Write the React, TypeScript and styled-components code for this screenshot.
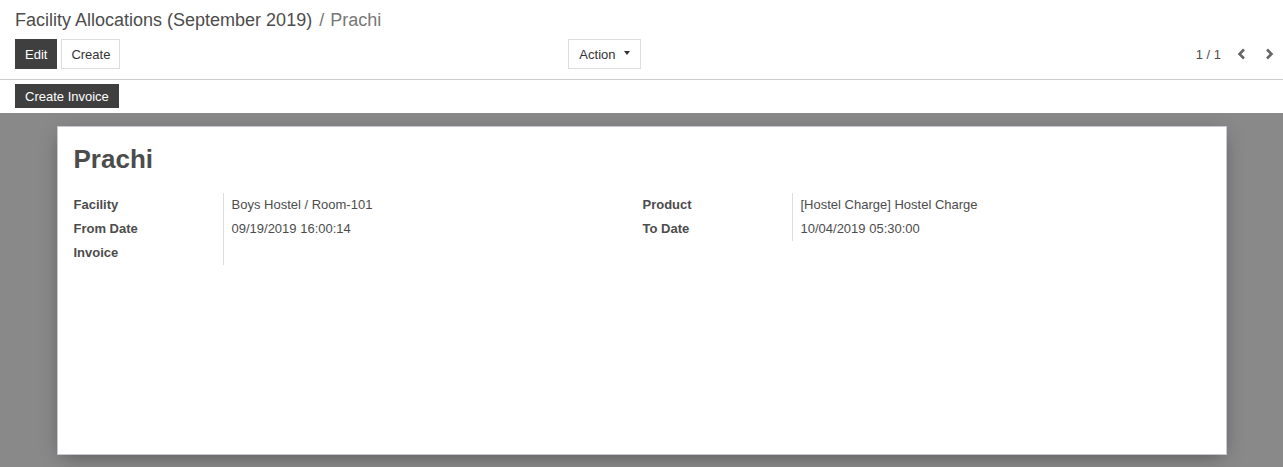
import styled, { createGlobalStyle } from "styled-components"

const GlobalStyle = createGlobalStyle`
  html, body {
    margin: 0;
    padding: 0;
    background: #ffffff;
    font-family: "Liberation Sans", Arial, sans-serif;
    font-size: 13px;
    color: #4c4c4c;
  }
`

type Field = { label: string; value?: string }

const leftFields: Field[] = [
  { label: "Facility", value: "Boys Hostel / Room-101" },
  { label: "From Date", value: "09/19/2019 16:00:14" },
  { label: "Invoice" },
]

const rightFields: Field[] = [
  { label: "Product", value: "[Hostel Charge] Hostel Charge" },
  { label: "To Date", value: "10/04/2019 05:30:00" },
]

const ChevronLeft = () => (
  <svg width="9" height="12" viewBox="0 0 9 12">
    <path d="M7 1.5 L2.5 6 L7 10.5" fill="none" stroke="#666" strokeWidth="2.6" />
  </svg>
)

const ChevronRight = () => (
  <svg width="9" height="12" viewBox="0 0 9 12">
    <path d="M2 1.5 L6.5 6 L2 10.5" fill="none" stroke="#666" strokeWidth="2.6" />
  </svg>
)

const FieldGroup = ({ fields }: { fields: Field[] }) => (
  <StyledGroup>
    {fields.map((f) => (
      <StyledFieldRow key={f.label}>
        <StyledLabel>{f.label}</StyledLabel>
        <StyledValue>{f.value}</StyledValue>
      </StyledFieldRow>
    ))}
  </StyledGroup>
)

const App = () => {
  return (
    <>
      <GlobalStyle />
      <StyledControlPanel>
        <StyledBreadcrumb>
          <span>Facility Allocations (September 2019)</span>
          <StyledCrumbSep>/</StyledCrumbSep>
          <StyledCrumbActive>Prachi</StyledCrumbActive>
        </StyledBreadcrumb>
        <StyledCpRow>
          <StyledCpLeft>
            <StyledButtons>
              <StyledButton $primary>Edit</StyledButton>
              <StyledButton>Create</StyledButton>
            </StyledButtons>
            <StyledButton $wide>
              Action <StyledCaret />
            </StyledButton>
          </StyledCpLeft>
          <StyledPager>
            <StyledPagerValue>1 / 1</StyledPagerValue>
            <StyledPagerArrow>
              <ChevronLeft />
            </StyledPagerArrow>
            <StyledPagerArrow>
              <ChevronRight />
            </StyledPagerArrow>
          </StyledPager>
        </StyledCpRow>
      </StyledControlPanel>

      <StyledStatusBar>
        <StyledSmallButton>Create Invoice</StyledSmallButton>
      </StyledStatusBar>

      <StyledSheetBackground>
        <StyledSheet>
          <StyledTitle>Prachi</StyledTitle>
          <StyledGroups>
            <FieldGroup fields={leftFields} />
            <FieldGroup fields={rightFields} />
          </StyledGroups>
        </StyledSheet>
      </StyledSheetBackground>
    </>
  )
}

export default App

const StyledControlPanel = styled.div`
  padding: 5px 15px 10px;
  border-bottom: 1px solid #cccccc;
`

const StyledBreadcrumb = styled.div`
  height: 30px;
  line-height: 30px;
  font-size: 18px;
  color: #4c4c4c;
  margin-bottom: 4px;
`

const StyledCrumbSep = styled.span`
  color: #777777;
  padding: 0 6px 0 7px;
`

const StyledCrumbActive = styled.span`
  color: #777777;
`

const StyledCpRow = styled.div`
  display: grid;
  grid-template-columns: 1fr 1fr;
  height: 30px;
`

const StyledCpLeft = styled.div`
  display: flex;
  justify-content: space-between;
  padding-right: 1px;
`

const StyledButtons = styled.div`
  display: flex;
  gap: 4px;
`

const StyledButton = styled.button<{ $primary?: boolean; $wide?: boolean }>`
  height: 30px;
  padding: 0 ${(p) => (p.$wide ? "10px" : "9px")};
  font-family: inherit;
  font-size: 13px;
  border: 1px solid ${(p) => (p.$primary ? "#3f3f3f" : "#dddddd")};
  background: ${(p) => (p.$primary ? "#3f3f3f" : "#ffffff")};
  color: ${(p) => (p.$primary ? "#ffffff" : "#333333")};
  display: flex;
  align-items: center;
  gap: 6px;
  cursor: pointer;
`

const StyledCaret = styled.span`
  display: inline-block;
  width: 0;
  height: 0;
  border-left: 3.5px solid transparent;
  border-right: 3.5px solid transparent;
  border-top: 4px solid #333333;
  margin-left: 2px;
  margin-top: -3px;
`

const StyledPager = styled.div`
  display: flex;
  justify-content: flex-end;
  align-items: center;
  margin-right: -15px;
`

const StyledPagerValue = styled.span`
  margin-right: 6px;
`

const StyledPagerArrow = styled.span`
  width: 28px;
  display: flex;
  justify-content: center;
`

const StyledStatusBar = styled.div`
  height: 33px;
  padding: 4px 15px 0;
  box-sizing: border-box;
`

const StyledSmallButton = styled.button`
  height: 24px;
  padding: 0 10px;
  font-family: inherit;
  font-size: 13px;
  border: none;
  background: #3f3f3f;
  color: #ffffff;
`

const StyledSheetBackground = styled.div`
  background: #898989;
  padding: 13px 0 12px;
  height: 354px;
  box-sizing: border-box;
`

const StyledSheet = styled.div`
  width: 1170px;
  height: 329px;
  margin: 0 auto;
  box-sizing: border-box;
  background: #ffffff;
  border: 1px solid #c8c8d3;
  box-shadow: 0 5px 20px -5px rgba(0, 0, 0, 0.4);
  padding: 16px 16px;
`

const StyledTitle = styled.h1`
  margin: 0;
  font-size: 26px;
  line-height: 32px;
  font-weight: bold;
  color: #4c4c4c;
`

const StyledGroups = styled.div`
  display: grid;
  grid-template-columns: 569px 1fr;
  margin-top: 18px;
`

const StyledGroup = styled.div`
  display: flex;
  flex-direction: column;
`

const StyledFieldRow = styled.div`
  display: grid;
  grid-template-columns: 150px 1fr;
  height: 24px;
  align-items: stretch;
`

const StyledLabel = styled.div`
  font-weight: bold;
  line-height: 24px;
  border-right: 1px solid #dddddd;
`

const StyledValue = styled.div`
  line-height: 24px;
  padding-left: 8px;
`
